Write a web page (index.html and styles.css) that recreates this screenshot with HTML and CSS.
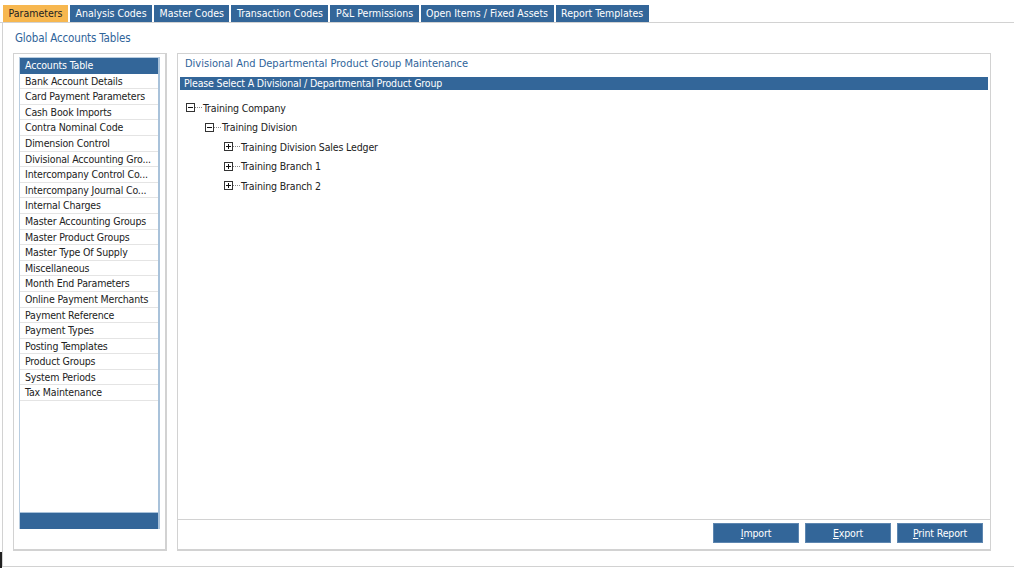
FILE: index.html
```html
<!DOCTYPE html>
<html lang="en">
<head>
    <meta charset="UTF-8">
    <meta name="viewport" content="width=device-width, initial-scale=1.0">
    <title>Global Accounts Tables</title>
    <link rel="stylesheet" href="styles.css">
</head>
<body>
    <nav class="tabs">
        <div class="tab active">Parameters</div>
        <div class="tab">Analysis Codes</div>
        <div class="tab">Master Codes</div>
        <div class="tab">Transaction Codes</div>
        <div class="tab">P&amp;L Permissions</div>
        <div class="tab">Open Items / Fixed Assets</div>
        <div class="tab">Report Templates</div>
    </nav>

    <div class="page">
        <h2 class="section-title">Global Accounts Tables</h2>

        <div class="content">
            <aside class="side-panel">
                <div class="table-list">
                    <ul class="list-items">
                        <li class="selected">Accounts Table</li>
                        <li>Bank Account Details</li>
                        <li>Card Payment Parameters</li>
                        <li>Cash Book Imports</li>
                        <li>Contra Nominal Code</li>
                        <li>Dimension Control</li>
                        <li>Divisional Accounting Gro...</li>
                        <li>Intercompany Control Co...</li>
                        <li>Intercompany Journal Co...</li>
                        <li>Internal Charges</li>
                        <li>Master Accounting Groups</li>
                        <li>Master Product Groups</li>
                        <li>Master Type Of Supply</li>
                        <li>Miscellaneous</li>
                        <li>Month End Parameters</li>
                        <li>Online Payment Merchants</li>
                        <li>Payment Reference</li>
                        <li>Payment Types</li>
                        <li>Posting Templates</li>
                        <li>Product Groups</li>
                        <li>System Periods</li>
                        <li>Tax Maintenance</li>
                    </ul>
                    <div class="list-footer"></div>
                </div>
            </aside>

            <main class="main-panel">
                <div class="panel-title">Divisional And Departmental Product Group Maintenance</div>
                <div class="panel-bar">Please Select A Divisional / Departmental Product Group</div>

                <div class="tree">
                    <div class="node level-0">
                        <svg class="toggle" width="9" height="9" viewBox="0 0 9 9"><rect x="0.5" y="0.5" width="8" height="8" fill="#fff" stroke="#333"/><path d="M2 4.5h5" stroke="#111"/></svg>
                        <span class="dots"></span>Training Company
                    </div>
                    <div class="node level-1">
                        <svg class="toggle" width="9" height="9" viewBox="0 0 9 9"><rect x="0.5" y="0.5" width="8" height="8" fill="#fff" stroke="#333"/><path d="M2 4.5h5" stroke="#111"/></svg>
                        <span class="dots"></span>Training Division
                    </div>
                    <div class="node level-2">
                        <svg class="toggle" width="9" height="9" viewBox="0 0 9 9"><rect x="0.5" y="0.5" width="8" height="8" fill="#fff" stroke="#333"/><path d="M2 4.5h5M4.5 2v5" stroke="#111"/></svg>
                        <span class="dots"></span>Training Division Sales Ledger
                    </div>
                    <div class="node level-2">
                        <svg class="toggle" width="9" height="9" viewBox="0 0 9 9"><rect x="0.5" y="0.5" width="8" height="8" fill="#fff" stroke="#333"/><path d="M2 4.5h5M4.5 2v5" stroke="#111"/></svg>
                        <span class="dots"></span>Training Branch 1
                    </div>
                    <div class="node level-2">
                        <svg class="toggle" width="9" height="9" viewBox="0 0 9 9"><rect x="0.5" y="0.5" width="8" height="8" fill="#fff" stroke="#333"/><path d="M2 4.5h5M4.5 2v5" stroke="#111"/></svg>
                        <span class="dots"></span>Training Branch 2
                    </div>
                </div>

                <div class="panel-footer">
                    <button class="btn"><u>I</u>mport</button>
                    <button class="btn"><u>E</u>xport</button>
                    <button class="btn"><u>P</u>rint Report</button>
                </div>
            </main>
        </div>
    </div>
    <div class="edge-mark"></div>
</body>
</html>
```

FILE: styles.css
```css
:root {
    --blue: #336699;
    --title-blue: #2f649a;
    --orange: #f7b74f;
    --border: #d2d2d2;
    --text: #222;
}

* {
    margin: 0;
    padding: 0;
    box-sizing: border-box;
}

body {
    font-family: "DejaVu Sans Condensed", "DejaVu Sans", sans-serif;
    font-size: 10.5px;
    letter-spacing: -0.15px;
    color: var(--text);
    background: #fff;
    width: 1014px;
    height: 568px;
    overflow: hidden;
    position: relative;
}

/* top tab strip */
.tabs {
    display: flex;
    gap: 2px;
    padding: 5px 0 0 3px;
    border-bottom: 1px solid var(--border);
    height: 23px;
}

.tab {
    background: var(--blue);
    color: #fff;
    height: 17px;
    line-height: 17px;
    padding: 0 5.5px;
    letter-spacing: 0;
    white-space: nowrap;
}

.tab.active {
    background: var(--orange);
    color: #222;
}

.page {
    margin-left: 2px;
    height: 544px;
    border-left: 1px solid var(--border);
    border-bottom: 1px solid var(--border);
    padding: 0 0 0 10px;
}

.section-title {
    font-size: 11.5px;
    font-weight: normal;
    color: var(--title-blue);
    padding: 8px 0 0 2px;
    height: 30px;
}

.content {
    display: flex;
    gap: 10px;
}

/* left table list */
.side-panel {
    width: 154px;
    height: 498px;
    border: 1px solid var(--border);
    border-right-width: 2px;
    border-bottom-width: 2px;
    padding: 3px 5px 0 5px;
}

.table-list {
    height: 472px;
    border-top: 1px solid #b9cde0;
    border-left: 1px solid #b9cde0;
    border-right: 2px solid #a9c2da;
    display: flex;
    flex-direction: column;
}

.list-items {
    list-style: none;
    flex: 1;
}

.list-items li {
    height: 15.6px;
    line-height: 14.6px;
    border-bottom: 1px solid #e4e4e4;
    padding-left: 5px;
    white-space: nowrap;
    overflow: hidden;
}

.list-items li.selected {
    background: var(--blue);
    color: #fff;
    border-bottom-color: var(--blue);
}

.list-footer {
    height: 17px;
    background: var(--blue);
    border-top: 1px solid #a9c2da;
}

/* right maintenance panel */
.main-panel {
    width: 814px;
    height: 498px;
    border: 1px solid var(--border);
    border-bottom-width: 2px;
    display: flex;
    flex-direction: column;
}

.panel-title {
    color: var(--title-blue);
    font-size: 11px;
    letter-spacing: 0;
    padding: 3px 0 0 7px;
    height: 23px;
    line-height: 14px;
}

.panel-bar {
    margin: 0 2px 0 2px;
    background: var(--blue);
    color: #fff;
    height: 13px;
    line-height: 13px;
    padding-left: 4px;
}

.tree {
    flex: 1;
    padding: 8px 0 0 8px;
}

.node {
    display: flex;
    align-items: center;
    height: 19.5px;
}

.node.level-1 {
    padding-left: 19px;
}

.node.level-2 {
    padding-left: 38px;
}

.toggle {
    flex: none;
}

.dots {
    width: 7px;
    margin-right: 1px;
    border-top: 1px dotted #888;
}

.panel-footer {
    border-top: 1px solid var(--border);
    display: flex;
    justify-content: flex-end;
    gap: 6px;
    padding: 3px 7px 0 0;
    height: 30px;
}

.btn {
    width: 86px;
    height: 20px;
    background: var(--blue);
    color: #fff;
    border: 1px solid #5d86b0;
    font-family: inherit;
    font-size: 10.5px;
    letter-spacing: -0.15px;
}

.edge-mark {
    position: absolute;
    left: 0;
    top: 552px;
    width: 2px;
    height: 16px;
    background: #222;
}
```
